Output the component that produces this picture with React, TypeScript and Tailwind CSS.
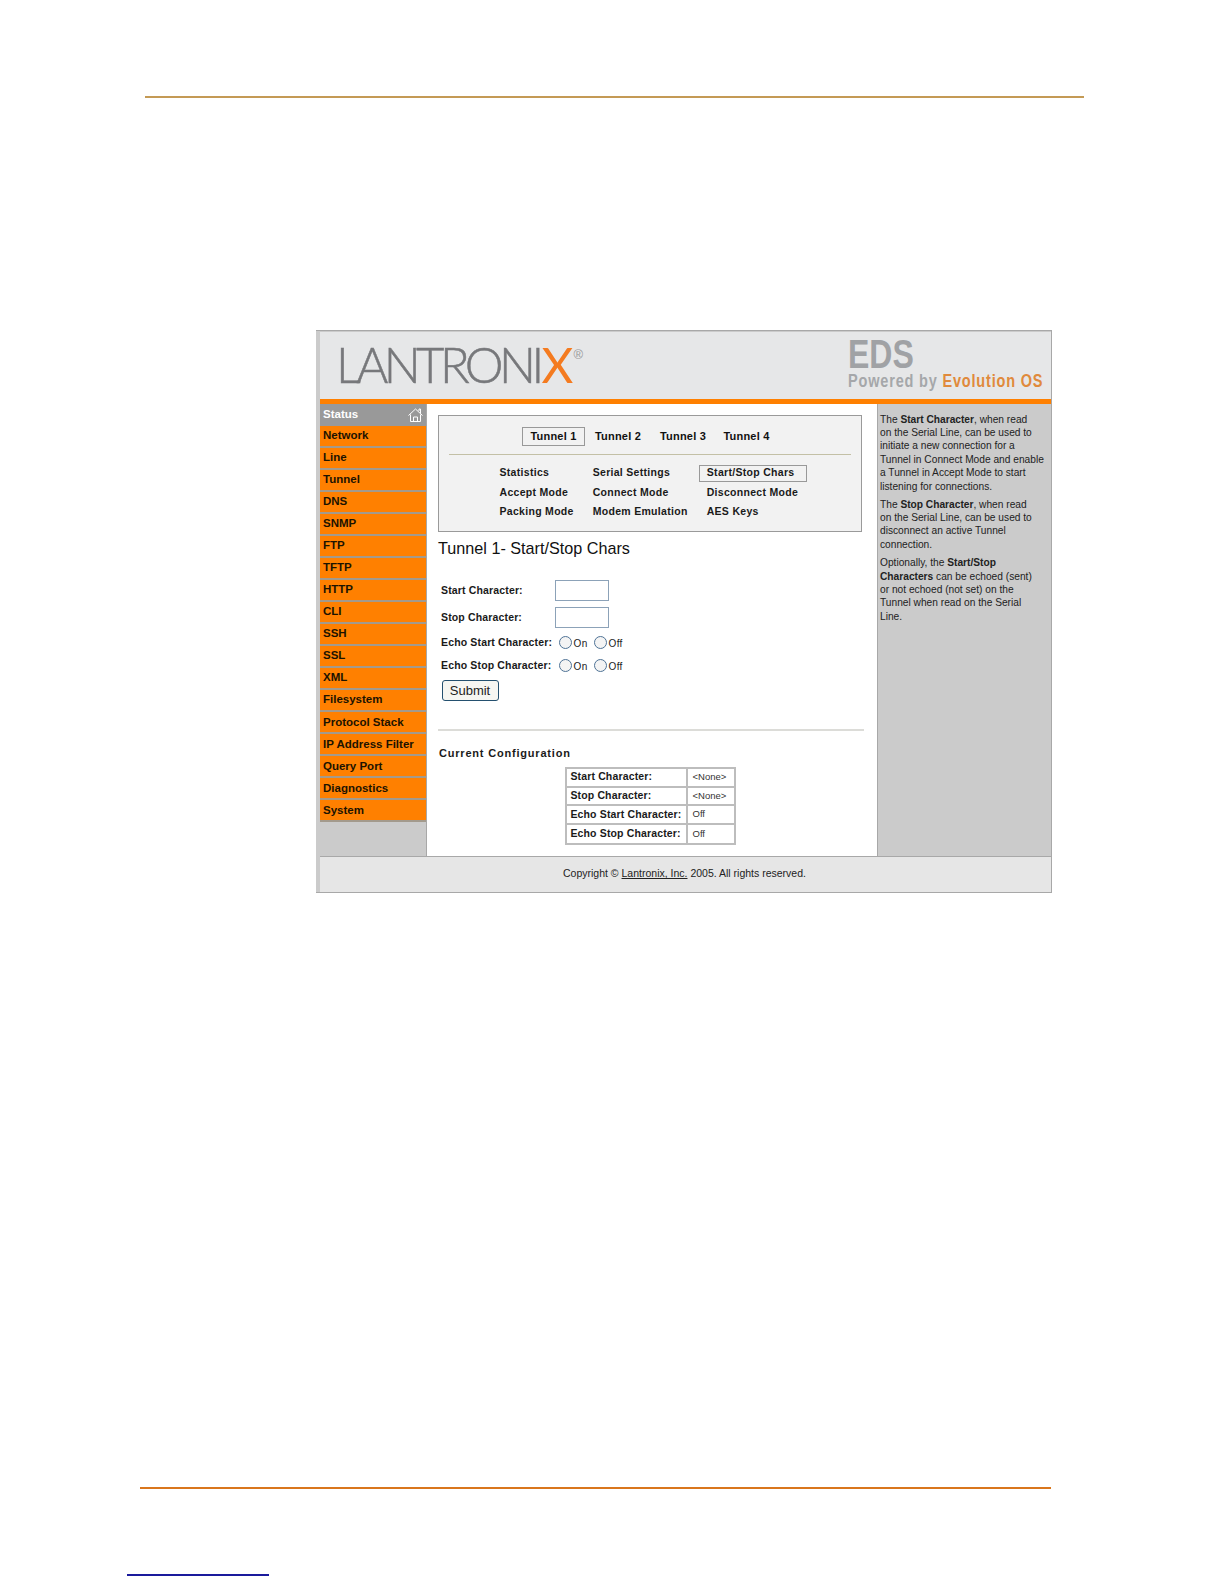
import React from "react";

const menuItems = [
  "Network",
  "Line",
  "Tunnel",
  "DNS",
  "SNMP",
  "FTP",
  "TFTP",
  "HTTP",
  "CLI",
  "SSH",
  "SSL",
  "XML",
  "Filesystem",
  "Protocol Stack",
  "IP Address Filter",
  "Query Port",
  "Diagnostics",
  "System",
];

const subLinks = [
  ["Statistics", "Serial Settings", "Start/Stop Chars"],
  ["Accept Mode", "Connect Mode", "Disconnect Mode"],
  ["Packing Mode", "Modem Emulation", "AES Keys"],
];

const configRows = [
  ["Start Character:", "<None>"],
  ["Stop Character:", "<None>"],
  ["Echo Start Character:", "Off"],
  ["Echo Stop Character:", "Off"],
];

const HomeIcon = () => (
  <svg width="15" height="14" viewBox="0 0 15 14" fill="none" stroke="#fff" strokeWidth="1">
    <path d="M0.5 7.5 L7.5 1 L14.5 7.5" />
    <path d="M11 3 V1 H12.5 V5.5" />
    <path d="M2.5 6.5 V13.5 H12.5 V6.5" />
    <path d="M5.5 13.5 V9 H9.5 V13.5" />
  </svg>
);

const Radio = ({ label }: { label: string }) => (
  <span className="flex items-center">
    <input
      type="radio"
      className="appearance-none w-[13px] h-[13px] rounded-full border border-[#4f7396] bg-[#f4f4f4]"
    />
    <span className="ml-[2px] mt-[2px] w-[18px] text-[10px] text-[#222] tracking-[0.3px]">{label}</span>
  </span>
);

const TextField = () => (
  <input type="text" className="w-[54px] h-[21px] border border-[#8ca2b8] bg-white" />
);

const FormLabel = ({ children, w }: { children: string; w: string }) => (
  <span className={`font-bold text-[10.5px] tracking-[0.15px] whitespace-nowrap text-[#1a1a1a] ${w}`}>
    {children}
  </span>
);

export default function App() {
  return (
    <div className="w-[1224px] h-[1584px] bg-white flex flex-col font-['Liberation_Sans',Arial,sans-serif] overflow-hidden">
      <div className="mt-[96px] ml-[145px] w-[939px] h-[1.5px] bg-[#c49a55]" />

      {/* device web manager shot */}
      <div className="mt-[232px] ml-[316px] w-[736px] h-[563px] flex flex-col bg-[#cbcbcb] border-t border-t-[#a8a8a8] border-r border-r-[#a8a8a8] border-b border-b-[#a8a8a8] pl-[4px] pt-[1px] shrink-0">
        <div className="h-[67px] bg-[#e6e7e8] flex justify-between shrink-0">
          <div className="ml-[16px] mt-[2px] flex items-start">
            <span className="text-[49px] leading-[60px] font-['Lato','Open_Sans',sans-serif] font-light tracking-[-4.6px] text-[#77787b] [-webkit-text-stroke:0.5px_#77787b]">
              LANTRONI
            </span>
            <span className="text-[49px] leading-[60px] font-['Lato','Open_Sans',sans-serif] font-normal text-[#f47b20] ml-[2px]">
              X
            </span>
            <span className="text-[13px] leading-[14px] text-[#999] mt-[14px]">®</span>
          </div>
          <div className="mr-[8px] mt-[4px] w-[195px] flex flex-col">
            <span className="text-[40px] leading-[36px] font-bold text-[#a0a2a5] scale-x-[0.8] origin-left">
              EDS
            </span>
            <span className="text-[18px] leading-[18px] font-bold tracking-[1px] text-[#a5a7aa] whitespace-nowrap scale-x-[0.807] origin-left">
              Powered by <span className="text-[#e08a3c]">Evolution OS</span>
            </span>
          </div>
        </div>
        <div className="h-[5px] bg-[#ff8000] shrink-0" />

        <div className="flex flex-1">
          <div className="w-[107px] flex flex-col bg-[#cbcbcb] border-r border-r-[#a8a8a8]">
            <div className="h-[22px] bg-[#999] flex items-center justify-between pl-[3px] pr-[3px]">
              <span className="text-[11.5px] font-bold text-white">Status</span>
              <HomeIcon />
            </div>
            {menuItems.map((item) => (
              <div
                key={item}
                className="h-[22.06px] bg-[#ff8000] border-b-2 border-b-[#a39a8c] flex items-center pl-[3px] text-[11.5px] font-bold text-[#1c1300]"
              >
                {item}
              </div>
            ))}
          </div>

          <div className="w-[450px] bg-white pl-[11px] pt-[11.5px]">
            <div className="w-[424px] h-[117px] bg-[#f2f2f2] border border-[#9a9a9a] flex flex-col items-center">
              <div className="mt-[11px] flex items-center text-[11px] font-bold text-[#111] tracking-[0.2px] w-full pl-[83px]">
                <span className="w-[63px] h-[19px] border border-[#999] flex items-center justify-center">Tunnel 1</span>
                <span className="ml-[10px] w-[65px]">Tunnel 2</span>
                <span className="w-[63.5px]">Tunnel 3</span>
                <span>Tunnel 4</span>
              </div>
              <div className="mt-[7.5px] w-[402px] h-px bg-[#c3c0a6]" />
              <div className="mt-[10px] w-full pl-[60.5px] flex flex-col gap-[2px] text-[10.5px] font-bold text-[#1a1a1a] tracking-[0.3px]">
                {subLinks.map((row) => (
                  <div key={row[0]} className="flex items-center h-[17.5px]">
                    <span className="w-[93.2px]">{row[0]}</span>
                    <span className="w-[106.6px]">{row[1]}</span>
                    <span
                      className={
                        row[2] === "Start/Stop Chars"
                          ? "w-[107.5px] h-[17px] border border-[#999] pl-[6.5px] flex items-center"
                          : "pl-[7.4px]"
                      }
                    >
                      {row[2]}
                    </span>
                  </div>
                ))}
              </div>
            </div>

            <h1 className="mt-[5.5px] text-[16.2px] leading-[20px] text-[#111]">Tunnel 1- Start/Stop Chars</h1>

            <div className="mt-[22px] ml-[3px] flex flex-col items-start">
              <div className="flex items-center">
                <FormLabel w="pt-[2px] w-[113.6px]">Start Character:</FormLabel>
                <TextField />
              </div>
              <div className="flex items-center mt-[6px]">
                <FormLabel w="pt-[2px] w-[113.6px]">Stop Character:</FormLabel>
                <TextField />
              </div>
              <div className="flex items-center mt-[7px] h-[16px]">
                <FormLabel w="w-[117.6px]">Echo Start Character:</FormLabel>
                <Radio label="On" />
                <span className="w-[2px]" />
                <Radio label="Off" />
              </div>
              <div className="flex items-center mt-[7px] h-[16px]">
                <FormLabel w="w-[117.6px]">Echo Stop Character:</FormLabel>
                <Radio label="On" />
                <span className="w-[2px]" />
                <Radio label="Off" />
              </div>
              <button className="mt-[6px] ml-[0.5px] w-[57px] h-[21px] rounded-[3px] border border-[#24506f] bg-[#f6f6f2] text-[13px] text-[#222]">
                Submit
              </button>
            </div>

            <div className="mt-[28px] w-[426px] h-[2px] bg-[#dcdcd8]" />
            <div className="mt-[16px] ml-px text-[11px] leading-[13px] font-bold tracking-[0.8px] text-[#1a1a1a]">
              Current Configuration
            </div>

            <table className="mt-[7.5px] ml-[127px] border-separate border-spacing-0 border-2 border-[#bdbdbd] text-[10.5px] text-[#1a1a1a]">
              <tbody>
                {configRows.map(([name, value], i) => (
                  <tr key={name}>
                    <td
                      className={`w-[121px] h-[18.6px] pl-[3.4px] font-bold tracking-[0.15px] whitespace-nowrap border-r-2 border-r-[#bdbdbd] ${i < 3 ? "border-b-2 border-b-[#bdbdbd]" : ""}`}
                    >
                      {name}
                    </td>
                    <td
                      className={`w-[46px] h-[18.6px] pl-[4.5px] text-[9.5px] text-[#333] ${i < 3 ? "border-b-2 border-b-[#bdbdbd]" : ""}`}
                    >
                      {value}
                    </td>
                  </tr>
                ))}
              </tbody>
            </table>
          </div>

          <div className="flex-1 bg-[#cbcbcb] border-l border-l-[#a8a8a8] pl-[2px] pt-[9px] text-[10.2px] leading-[13.4px] text-[#222]">
            <p className="whitespace-nowrap">
              The <b>Start Character</b>, when read
              <br />
              on the Serial Line, can be used to
              <br />
              initiate a new connection for a
              <br />
              Tunnel in Connect Mode and enable
              <br />a Tunnel in Accept Mode to start
              <br />
              listening for connections.
            </p>
            <p className="mt-[4.6px] whitespace-nowrap">
              The <b>Stop Character</b>, when read
              <br />
              on the Serial Line, can be used to
              <br />
              disconnect an active Tunnel
              <br />
              connection.
            </p>
            <p className="mt-[5px] whitespace-nowrap">
              Optionally, the <b>Start/Stop</b>
              <br />
              <b>Characters</b> can be echoed (sent)
              <br />
              or not echoed (not set) on the
              <br />
              Tunnel when read on the Serial
              <br />
              Line.
            </p>
          </div>
        </div>

        <div className="h-[36px] bg-[#e6e6e6] border-t border-t-[#a8a8a8] flex items-center justify-center text-[10.5px] text-[#222] pr-[2px] shrink-0">
          <span>
            Copyright © <span className="underline">Lantronix, Inc.</span> 2005. All rights reserved.
          </span>
        </div>
      </div>

      <div className="mt-[594px] ml-[140px] w-[911px] h-[2.5px] bg-[#d9761c] shrink-0" />
      <div className="mt-[85px] ml-[127px] w-[142px] h-[1.5px] bg-[#1a1a9c] shrink-0" />
    </div>
  );
}
